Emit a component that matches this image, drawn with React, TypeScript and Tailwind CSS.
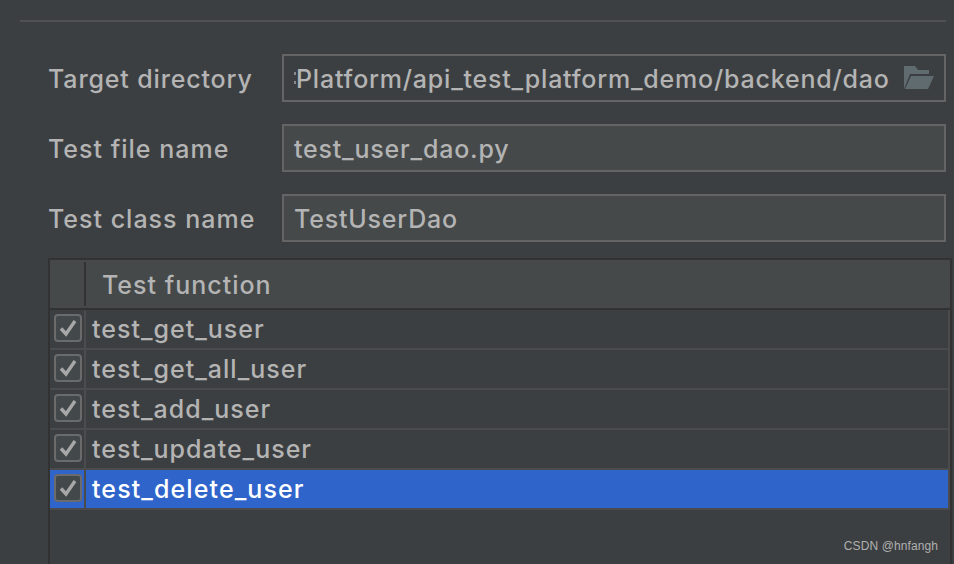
const rows = ["test_get_user", "test_get_all_user", "test_add_user", "test_update_user", "test_delete_user"];

const fields = [
  { label: "Target directory", value: "Platform/api_test_platform_demo/backend/dao", dir: true },
  { label: "Test file name", value: "test_user_dao.py", dir: false },
  { label: "Test class name", value: "TestUserDao", dir: false },
];

function FolderIcon() {
  return (
    <svg width="30" height="24" viewBox="0 0 30 24" className="shrink-0">
      <path d="M0 0H11L14 4H25V8H6L0 23Z" fill="#5f6b6e" />
      <path d="M7 10H30L24 23H1Z" fill="#5f6b6e" />
    </svg>
  );
}

function Check() {
  return (
    <div className="w-[28px] h-[28px] rounded-[4px] border-[2px] border-[#6b6b6b] bg-[#43494a] flex items-center justify-center">
      <svg width="20" height="20" viewBox="0 0 20 20">
        <path d="M3 10.5L8 16L17 3" fill="none" stroke="#a7a7a7" strokeWidth="3.4" />
      </svg>
    </div>
  );
}

export default function App() {
  return (
    <div className="relative w-[954px] h-[564px] overflow-hidden bg-[#3c3f41] font-['Inter',sans-serif] font-[450] text-[25px] leading-[32px] tracking-[1px] text-[#b4b4b4] pt-5">
      {/* Separator */}
      <div className="h-[2px] ml-5 mr-2 bg-[#515151]" />

      {/* Fields */}
      <div className="mt-[32px] ml-[48px] mr-2 flex flex-col gap-[22px]">
        {fields.map((f) => (
          <div key={f.label} className="flex items-center h-[48px]">
            <div className={`w-[234px] pt-[2px] ${f.dir ? "tracking-[0.85px]" : ""}`}>{f.label}</div>
            <div className={`flex-1 h-[48px] border-[2px] border-[#646464] flex items-center min-w-0 ${f.dir ? "pl-[10px] pr-[10px]" : "bg-[#45494a] pl-[10px] tracking-[0.8px]"}`}>
              {f.dir && (
                <div className="w-[2px] h-[12px] flex flex-col justify-between">
                  <div className="h-[3px] bg-[#8a8a8a]" />
                  <div className="h-[3px] bg-[#8a8a8a]" />
                </div>
              )}
              <span className={`flex-1 whitespace-nowrap pt-[2px] ${f.dir ? "tracking-[0.79px]" : ""}`}>{f.value}</span>
              {f.dir && <FolderIcon />}
            </div>
          </div>
        ))}
      </div>

      {/* Table */}
      <div className="mt-[16px] ml-[48px] mr-[2px] h-[320px] border-l-[2px] border-t-[2px] border-r-[2px] border-[#323232]">
        <div className="flex h-[50px] bg-[#45494a] border-b-[2px] border-[#323232]">
          <div className="w-[36px] flex items-center justify-end py-[2px]">
            <div className="w-[2px] h-full bg-[#323232]" />
          </div>
          <div className="pl-[16px] pt-[2px] flex items-center">Test function</div>
        </div>
        {rows.map((name, i) => {
          const selected = i === rows.length - 1;
          return (
            <div key={name} className={`flex h-[40px] border-b-[2px] border-r-[2px] border-[#4b4b4b] ${selected ? "bg-[#2f65ca] text-white tracking-[1.1px]" : ""}`}>
              <div className="w-[36px] border-r-[2px] border-[#4b4b4b] flex items-center pl-[4px] pb-[2px]">
                <Check />
              </div>
              <div className="pl-[6px] flex items-center">{name}</div>
            </div>
          );
        })}
      </div>

      {/* Watermark */}
      <span className="absolute right-[16px] bottom-[10px] text-[12px] leading-[16px] font-normal text-[#b0b0b0] font-['Liberation_Sans',sans-serif] tracking-[0.1px]">CSDN @hnfangh</span>
    </div>
  );
}
